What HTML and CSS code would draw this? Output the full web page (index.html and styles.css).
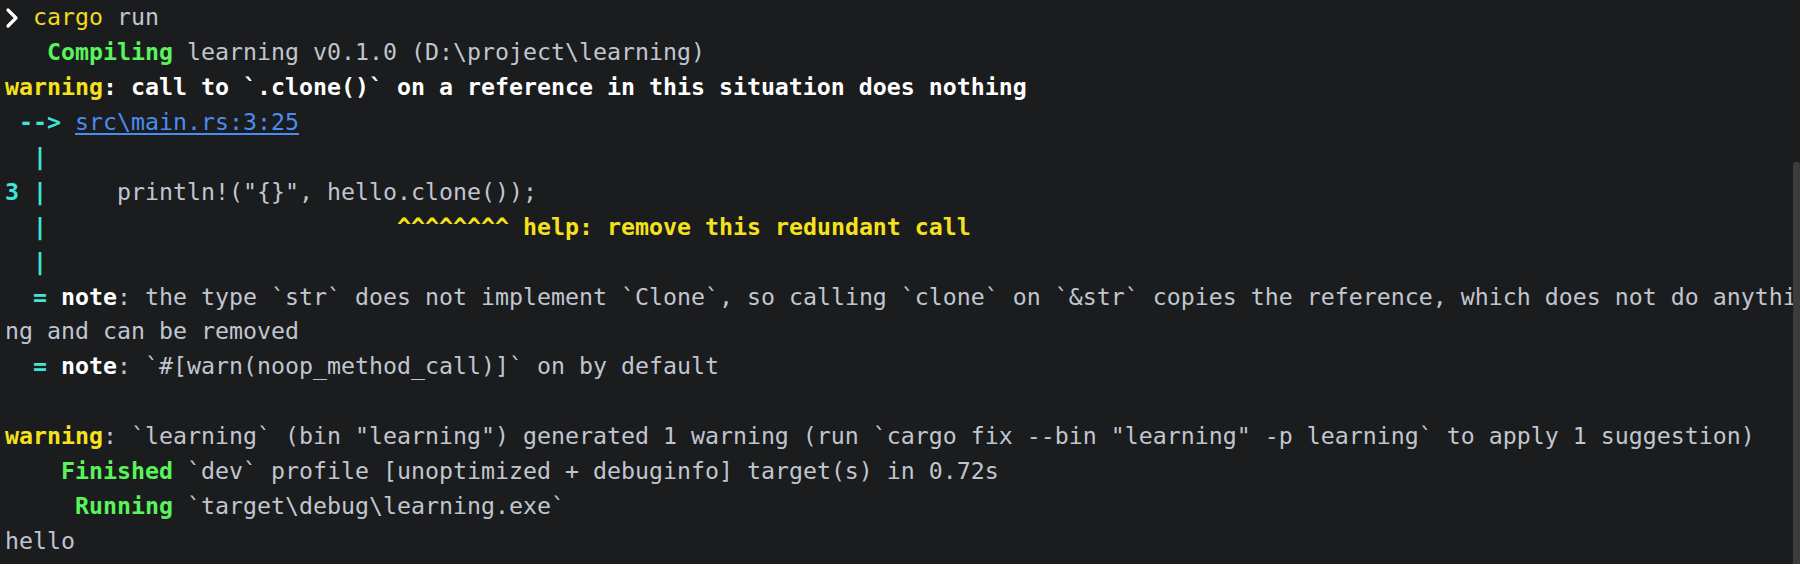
FILE: index.html
```html
<!DOCTYPE html>
<html lang="en">
<head>
<meta charset="utf-8">
<title>cargo run</title>
<link rel="stylesheet" href="styles.css">
</head>
<body>
<main class="term">
<div class="line"><svg class="prompt" width="14" height="22" viewBox="0 0 14 22" aria-hidden="true"><polyline points="3,3 11,11 3,19" fill="none" stroke="#ffffff" stroke-width="3.2" stroke-linecap="round" stroke-linejoin="round"/></svg> <span class="cmd">cargo</span> run</div>
<div class="line">   <span class="ok">Compiling</span> learning v0.1.0 (D:\project\learning)</div>
<div class="line"><span class="warn">warning</span><span class="strong">: call to `.clone()` on a reference in this situation does nothing</span></div>
<div class="line"> <span class="cy">--&gt;</span> <a class="link" href="#">src\main.rs:3:25</a></div>
<div class="line">  <span class="cy">|</span></div>
<div class="line"><span class="cy">3 |</span>     println!("{}", hello.clone());</div>
<div class="line">  <span class="cy">|</span>                         <span class="warn">^^^^^^^^ help: remove this redundant call</span></div>
<div class="line">  <span class="cy">|</span></div>
<div class="line">  <span class="cy">=</span> <span class="strong">note</span>: the type `str` does not implement `Clone`, so calling `clone` on `&amp;str` copies the reference, which does not do anythi</div>
<div class="line">ng and can be removed</div>
<div class="line">  <span class="cy">=</span> <span class="strong">note</span>: `#[warn(noop_method_call)]` on by default</div>
<div class="line"> </div>
<div class="line"><span class="warn">warning</span>: `learning` (bin "learning") generated 1 warning (run `cargo fix --bin "learning" -p learning` to apply 1 suggestion)</div>
<div class="line">    <span class="ok">Finished</span> `dev` profile [unoptimized + debuginfo] target(s) in 0.72s</div>
<div class="line">     <span class="ok">Running</span> `target\debug\learning.exe`</div>
<div class="line">hello</div>
</main>
<div class="scroll-thumb" aria-hidden="true"></div>
</body>
</html>
```
FILE: styles.css
```css
html, body {
  margin: 0;
  padding: 0;
  background: #1b1c1e;
  height: 100%;
  overflow: hidden;
}

body {
  position: relative;
  width: 1800px;
  height: 564px;
}

.term {
  display: flex;
  flex-direction: column;
  padding: 0 0 0 5px;
  font-family: "DejaVu Sans Mono", "Liberation Mono", monospace;
  font-size: 23.25px;
  line-height: 34.95px;
  color: #c0c6cf;
  overflow: hidden;
}

.line {
  height: 34.95px;
  white-space: pre;
}

.prompt {
  display: inline-block;
  vertical-align: -4px;
}

.cmd {
  color: #f2da1e;
}

.ok {
  color: #5af35c;
  font-weight: bold;
}

.warn {
  color: #f6e21c;
  font-weight: bold;
}

.strong {
  color: #ffffff;
  font-weight: bold;
}

.cy {
  color: #3fe6d8;
  font-weight: bold;
}

.link {
  color: #4b8cf0;
  text-decoration: underline;
  text-underline-offset: 3px;
}

.scroll-thumb {
  position: absolute;
  right: 0;
  top: 162px;
  bottom: 0;
  width: 7px;
  background: #3b3c3f;
  border-radius: 3px 3px 0 0;
}
```
